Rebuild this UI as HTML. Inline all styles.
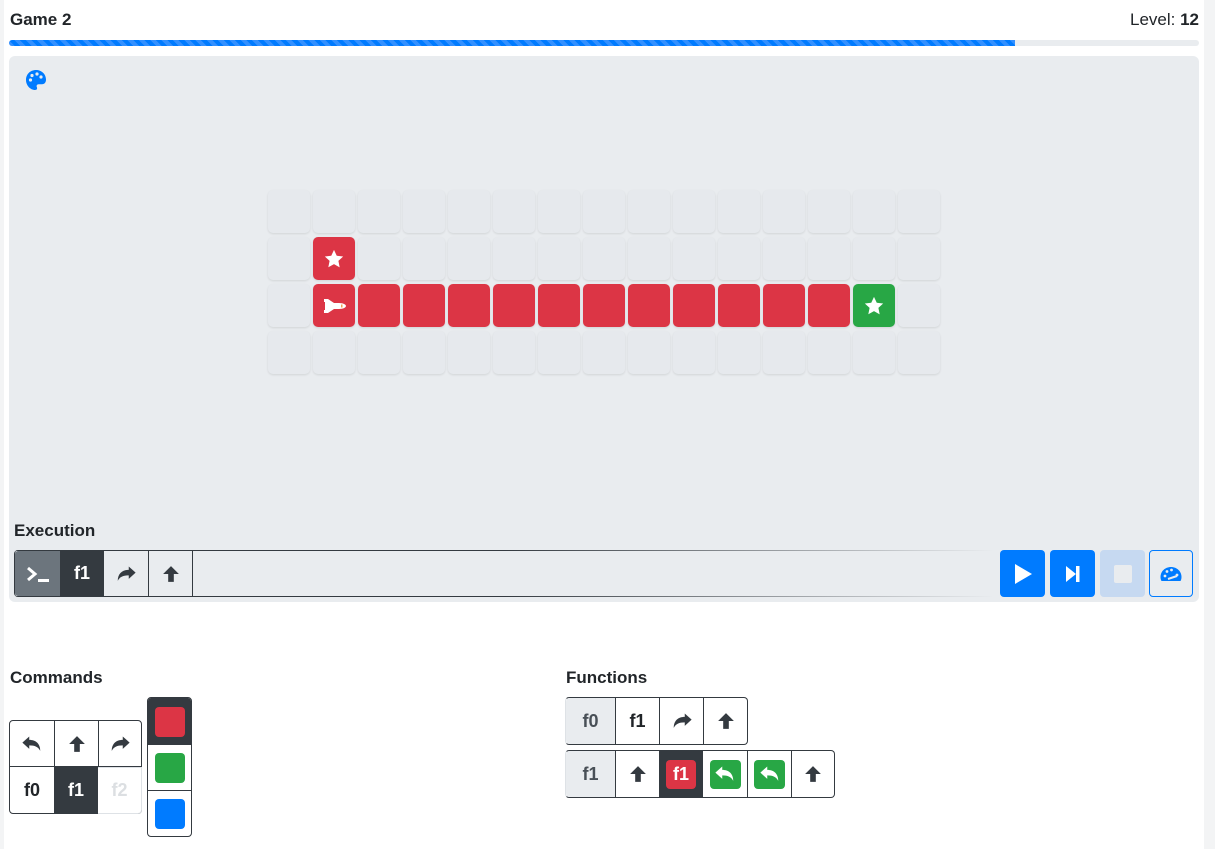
<!DOCTYPE html>
<html><head><meta charset="utf-8"><style>
*{box-sizing:border-box;margin:0;padding:0}
body{width:1215px;height:849px;background:#fff;font-family:"Liberation Sans",sans-serif;color:#212529;position:relative;overflow:hidden}
.a{position:absolute}
.h{font-weight:bold;font-size:17px}
.grid{position:absolute;left:268px;top:190px;display:grid;grid-template-columns:repeat(15,42px);grid-auto-rows:43px;column-gap:3px;row-gap:4px}
.grid div{background:#e6e9ed;border-radius:5px;box-shadow:0 1px 2px rgba(0,0,0,.1);display:flex;align-items:center;justify-content:center}
.grid .r{background:#dc3545}.grid .g{background:#28a745}
.c{position:absolute;display:flex;align-items:center;justify-content:center;font-weight:bold;font-size:18px}
.bl{border-left:1px solid #343a40}
.btn{position:absolute;top:550px;width:45px;height:47px;border-radius:4px;background:#007bff;display:flex;align-items:center;justify-content:center}
</style></head><body>
<div class="a" style="left:0;top:0;width:4px;height:849px;background:#f3f4f5"></div>
<div class="a" style="left:1204px;top:0;width:11px;height:849px;background:#f3f4f5"></div>
<div class="a h" style="left:10px;top:10px">Game 2</div>
<div class="a" style="left:1130px;top:10px;font-size:17px">Level: <b>12</b></div>
<div class="a" style="left:9px;top:40px;width:1190px;height:6px;border-radius:3px;background:#e9ecef"></div>
<div class="a" style="left:9px;top:40px;width:1006px;height:6px;border-radius:3px 0 0 3px;background:repeating-linear-gradient(45deg,#3390ff 0 4px,#007bff 4px 8px)"></div>
<div class="a" style="left:9px;top:56px;width:1190px;height:546px;border-radius:6px;background:#e9ecef"></div>
<svg class="a" style="left:25px;top:69px" width="22" height="22" viewBox="0 0 22 22"><path d="M11 1C5 1 1 5.5 1 11c0 5.5 4.5 10 9 10 2 0 2.5-1.5 1.8-3-.6-1.3.2-2.8 1.8-2.8H17c2.5 0 4-2 4-4.5C21 5 16.5 1 11 1z" fill="#007bff"/><circle cx="5.5" cy="11" r="1.6" fill="#e9ecef"/><circle cx="7" cy="6.5" r="1.6" fill="#e9ecef"/><circle cx="12" cy="5" r="1.6" fill="#e9ecef"/><circle cx="16" cy="8" r="1.6" fill="#e9ecef"/></svg>

<div class="grid">
<div></div><div></div><div></div><div></div><div></div><div></div><div></div><div></div><div></div><div></div><div></div><div></div><div></div><div></div><div></div>
<div></div><div class="r"><svg width="22" height="22" viewBox="0 0 24 24"><path d="M12 2l3 6.5 7 .8-5.2 4.8 1.4 7L12 17.6 5.8 21l1.4-7L2 9.3l7-.8z" fill="#fff"/></svg></div><div></div><div></div><div></div><div></div><div></div><div></div><div></div><div></div><div></div><div></div><div></div><div></div><div></div>
<div></div><div class="r"><svg width="28" height="18" viewBox="0 0 28 18"><path d="M4 2h4l6 4h5c4 0 7 1.5 7 3s-3 3-7 3h-5l-6 4H4v-3h1V5H4z" fill="#fff"/><rect x="21" y="7.5" width="1.5" height="3" fill="#f0a050"/></svg></div><div class="r"></div><div class="r"></div><div class="r"></div><div class="r"></div><div class="r"></div><div class="r"></div><div class="r"></div><div class="r"></div><div class="r"></div><div class="r"></div><div class="r"></div><div class="g"><svg width="22" height="22" viewBox="0 0 24 24"><path d="M12 2l3 6.5 7 .8-5.2 4.8 1.4 7L12 17.6 5.8 21l1.4-7L2 9.3l7-.8z" fill="#fff"/></svg></div><div></div>
<div></div><div></div><div></div><div></div><div></div><div></div><div></div><div></div><div></div><div></div><div></div><div></div><div></div><div></div><div></div>
</div>

<div class="a h" style="left:14px;top:521px">Execution</div>
<div class="a" style="left:14px;top:550px;width:980px;height:47px;border-radius:4px 0 0 4px;border-left:1px solid #343a40;background:linear-gradient(90deg,#343a40 0,#343a40 50%,rgba(52,58,64,0) 100%) top/100% 1px no-repeat,linear-gradient(90deg,#343a40 0,#343a40 50%,rgba(52,58,64,0) 100%) bottom/100% 1px no-repeat"></div>
<div class="c" style="left:15px;top:551px;width:45px;height:45px;background:#6c757d;color:#fff;border-radius:3px 0 0 3px"><svg width="26" height="20" viewBox="0 0 26 20"><path d="M3 4l7 6-7 6" stroke="#fff" stroke-width="3" fill="none"/><rect x="13" y="15" width="11" height="3" fill="#fff"/></svg></div>
<div class="c" style="left:60px;top:551px;width:44px;height:45px;background:#343a40;color:#fff">f1</div>
<div class="c" style="left:104px;top:551px;width:44px;height:45px"><svg width="22" height="20" viewBox="0 0 16 14"><path d="M15 6L10 1.5V4C5 4 2 7 2 12c1.5-3 4-4 8-4v2.5z" fill="#343a40"/></svg></div>
<div class="c bl" style="left:148px;top:551px;width:44px;height:45px"><svg width="18" height="20" viewBox="0 0 16 16"><path d="M8 1l7 7h-4.5v7h-5V8H1z" fill="#343a40"/></svg></div>
<div class="a bl" style="left:192px;top:551px;height:45px"></div>
<div class="btn" style="left:1000px"><svg width="20" height="22" viewBox="0 0 20 22"><path d="M2 1l17 10L2 21z" fill="#fff"/></svg></div>
<div class="btn" style="left:1050px"><svg width="16" height="18" viewBox="0 0 16 18"><path d="M1 1l10 8-10 8z" fill="#fff"/><rect x="11" y="1" width="3.5" height="16" fill="#fff"/></svg></div>
<div class="btn" style="left:1100px;background:#c6d9f1"><div style="width:18px;height:18px;background:#e9ecef;border-radius:2px"></div></div>
<div class="btn" style="left:1149px;width:44px;background:transparent;border:1px solid #007bff"><svg width="24" height="18" viewBox="0 0 24 18"><path d="M12 2C6 2 1.5 6.5 1.5 12c0 2 .5 3 1 4h19c.5-1 1-2 1-4C22.5 6.5 18 2 12 2z" fill="#007bff"/><circle cx="6" cy="11" r="1.4" fill="#e9ecef"/><circle cx="8" cy="6.5" r="1.4" fill="#e9ecef"/><circle cx="12.5" cy="5" r="1.4" fill="#e9ecef"/><circle cx="18" cy="10" r="1.4" fill="#e9ecef"/><path d="M9 14l9-3" stroke="#e9ecef" stroke-width="2"/></svg></div>

<div class="a h" style="left:10px;top:668px">Commands</div>
<div class="a" style="left:9px;top:720px;width:133px;height:94px;border:1px solid #343a40;border-radius:4px"></div>
<div class="c" style="left:10px;top:721px;width:44px;height:46px;border-bottom:1px solid #343a40"><svg width="22" height="20" viewBox="0 0 16 14"><path d="M1 6L6 1.5V4c5 0 8 3 8 8-1.5-3-4-4-8-4v2.5z" fill="#343a40"/></svg></div>
<div class="c bl" style="left:54px;top:721px;width:44px;height:46px;border-bottom:1px solid #343a40"><svg width="18" height="20" viewBox="0 0 16 16"><path d="M8 1l7 7h-4.5v7h-5V8H1z" fill="#343a40"/></svg></div>
<div class="c bl" style="left:98px;top:721px;width:43px;height:46px;border-bottom:1px solid #343a40"><svg width="22" height="20" viewBox="0 0 16 14"><path d="M15 6L10 1.5V4C5 4 2 7 2 12c1.5-3 4-4 8-4v2.5z" fill="#343a40"/></svg></div>
<div class="c" style="left:10px;top:767px;width:44px;height:46px">f0</div>
<div class="c" style="left:54px;top:767px;width:44px;height:46px;background:#343a40;color:#fff">f1</div>
<div class="c" style="left:98px;top:767px;width:44px;height:47px;color:#dcdfe2;background:#fff;border:1px solid #dee2e6;border-left:none;border-radius:0 0 4px 0">f2</div>
<div class="a" style="left:147px;top:697px;width:45px;height:140px;border:1px solid #343a40;border-radius:4px;overflow:hidden">
<div style="height:47px;background:#343a40;display:flex;align-items:center;justify-content:center"><div style="width:30px;height:30px;border-radius:4px;background:#dc3545"></div></div>
<div style="height:46px;border-bottom:1px solid #343a40;display:flex;align-items:center;justify-content:center"><div style="width:30px;height:30px;border-radius:4px;background:#28a745"></div></div>
<div style="height:46px;display:flex;align-items:center;justify-content:center"><div style="width:30px;height:30px;border-radius:4px;background:#007bff"></div></div>
</div>

<div class="a h" style="left:566px;top:668px">Functions</div>
<div class="a" style="left:565px;top:697px;width:183px;height:48px;border:1px solid #343a40;border-left-color:#dee2e6;border-radius:4px"></div>
<div class="c" style="left:566px;top:698px;width:49px;height:46px;background:#e9ecef;color:#495057;border-radius:4px 0 0 4px">f0</div>
<div class="c bl" style="left:615px;top:698px;width:44px;height:46px">f1</div>
<div class="c bl" style="left:659px;top:698px;width:44px;height:46px"><svg width="22" height="20" viewBox="0 0 16 14"><path d="M15 6L10 1.5V4C5 4 2 7 2 12c1.5-3 4-4 8-4v2.5z" fill="#343a40"/></svg></div>
<div class="c bl" style="left:703px;top:698px;width:44px;height:46px"><svg width="18" height="20" viewBox="0 0 16 16"><path d="M8 1l7 7h-4.5v7h-5V8H1z" fill="#343a40"/></svg></div>

<div class="a" style="left:565px;top:750px;width:270px;height:48px;border:1px solid #343a40;border-left-color:#dee2e6;border-radius:4px"></div>
<div class="c" style="left:566px;top:751px;width:49px;height:46px;background:#e9ecef;color:#495057;border-radius:4px 0 0 4px">f1</div>
<div class="c bl" style="left:615px;top:751px;width:44px;height:46px"><svg width="18" height="20" viewBox="0 0 16 16"><path d="M8 1l7 7h-4.5v7h-5V8H1z" fill="#343a40"/></svg></div>
<div class="c" style="left:659px;top:751px;width:44px;height:46px;background:#343a40"><div style="width:30px;height:29px;border-radius:4px;background:#dc3545;color:#fff;display:flex;align-items:center;justify-content:center">f1</div></div>
<div class="c" style="left:703px;top:751px;width:44px;height:46px"><div style="width:31px;height:29px;border-radius:4px;background:#28a745;display:flex;align-items:center;justify-content:center"><svg width="22" height="20" viewBox="0 0 16 14"><path d="M1 6L6 1.5V4c5 0 8 3 8 8-1.5-3-4-4-8-4v2.5z" fill="#fff"/></svg></div></div>
<div class="c bl" style="left:747px;top:751px;width:44px;height:46px"><div style="width:31px;height:29px;border-radius:4px;background:#28a745;display:flex;align-items:center;justify-content:center"><svg width="22" height="20" viewBox="0 0 16 14"><path d="M1 6L6 1.5V4c5 0 8 3 8 8-1.5-3-4-4-8-4v2.5z" fill="#fff"/></svg></div></div>
<div class="c bl" style="left:791px;top:751px;width:43px;height:46px"><svg width="18" height="20" viewBox="0 0 16 16"><path d="M8 1l7 7h-4.5v7h-5V8H1z" fill="#343a40"/></svg></div>
</body></html>
